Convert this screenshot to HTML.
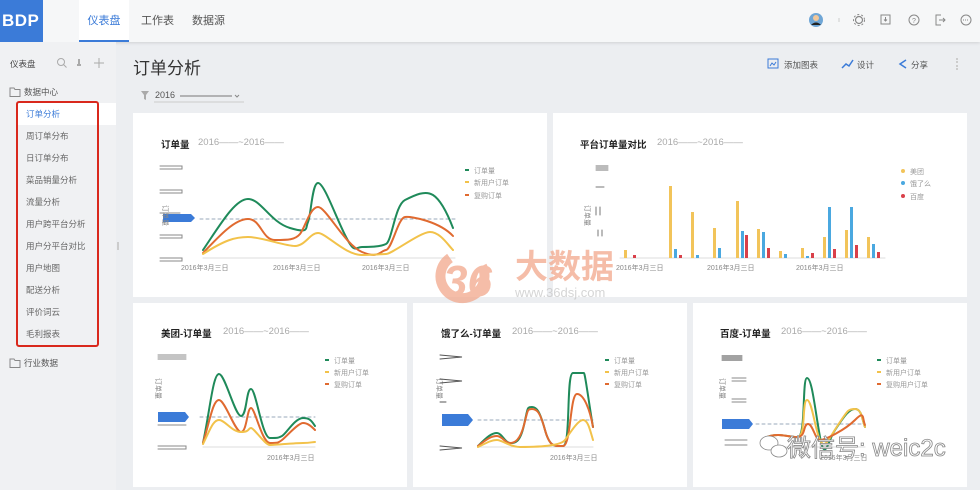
<!DOCTYPE html>
<html><head><meta charset="utf-8">
<style>
*{margin:0;padding:0;box-sizing:border-box}
body{width:980px;height:490px;overflow:hidden;background:#eceef1;font-family:"Liberation Sans","Noto Sans CJK SC",sans-serif;position:relative;color:#333}
.abs{position:absolute}
.hdr{left:0;top:0;width:980px;height:42px;background:#f6f7f8;box-shadow:0 1px 3px rgba(0,0,0,.12)}
.logo{left:0;top:0;width:43px;height:42px;background:#3b7bd8;color:#fff;font-weight:bold;font-size:17px;line-height:42px;padding-left:2px;letter-spacing:.5px}
.tab{top:0;height:42px;line-height:42px;font-size:11px;color:#555}
.side{left:0;top:42px;width:116px;height:448px;background:#f0f1f3}
.card{background:#fff;position:absolute}
.t{font-size:9.5px;font-weight:bold;color:#222;position:absolute}
.d{font-size:9.5px;color:#aaa;position:absolute}
.si{position:absolute;left:26px;font-size:8.5px;color:#666}
.lg{font-size:7px;color:#999}
</style></head><body>
<div class="abs hdr"></div>
<div class="abs logo">BDP</div>
<div class="abs tab" style="left:79px;width:50px;background:#fff;text-align:center;color:#3b7bd8;border-bottom:2px solid #3b7bd8">仪表盘</div>
<div class="abs tab" style="left:141px">工作表</div>
<div class="abs tab" style="left:192px">数据源</div>
<svg class="abs" style="left:800px;top:8px" width="180" height="26" viewBox="800 8 180 26">
<circle cx="816" cy="20" r="7" fill="#6fa6d6"/><circle cx="816" cy="18" r="3" fill="#f1c79a"/><path d="M811 25q5-5 10 0" fill="#222"/>
<line x1="839" y1="18" x2="839" y2="22" stroke="#ccc"/>
<circle cx="859" cy="20" r="3.5" fill="none" stroke="#888" stroke-width="1.2"/><circle cx="859" cy="20" r="5.5" fill="none" stroke="#888" stroke-dasharray="2 2"/>
<rect x="881" y="15" width="9" height="9" fill="none" stroke="#888"/><path d="M885.5 17v4M884 19.5l1.5 1.5 1.5-1.5" stroke="#888" fill="none"/>
<circle cx="914" cy="20" r="5" fill="none" stroke="#888"/><text x="912" y="23" font-size="7" fill="#888">?</text>
<path d="M941 15h-5v10h5M939 20h6M943 18l2 2-2 2" stroke="#888" fill="none"/>
<circle cx="966" cy="20" r="5" fill="none" stroke="#888"/><path d="M963 20h6" stroke="#888" stroke-dasharray="1 1"/>
</svg>
<div class="abs side"></div>
<div class="abs" style="left:10px;top:58px;font-size:8.5px;color:#444">仪表盘</div>
<svg class="abs" style="left:55px;top:56px" width="50" height="14"><circle cx="6" cy="6" r="3.5" fill="none" stroke="#aaa"/><path d="M8.5 8.5l3 3" stroke="#aaa"/><path d="M24 3v6M22 9h4" stroke="#aaa" stroke-width="2"/><path d="M44 2v10M39 7h10" stroke="#aaa"/></svg>
<svg class="abs" style="left:9px;top:86px" width="12" height="12"><path d="M1 2h4l1 1.5h5v7H1z" fill="none" stroke="#888"/></svg>
<div class="abs" style="left:24px;top:86px;font-size:8.5px;color:#555">数据中心</div>
<div class="abs" style="left:16px;top:103px;width:100px;height:22px;background:#fff"></div>
<div class="abs" style="left:16px;top:101px;width:83px;height:246px;border:2px solid #d9281c;border-radius:3px"></div>
<div class="si" style="top:108px;color:#3b7bd8">订单分析</div>
<div class="si" style="top:130px">周订单分布</div>
<div class="si" style="top:152px">日订单分布</div>
<div class="si" style="top:174px">菜品销量分析</div>
<div class="si" style="top:196px">流量分析</div>
<div class="si" style="top:218px">用户跨平台分析</div>
<div class="si" style="top:240px">用户分平台对比</div>
<div class="si" style="top:262px">用户地图</div>
<div class="si" style="top:284px">配送分析</div>
<div class="si" style="top:306px">评价词云</div>
<div class="si" style="top:328px">毛利报表</div>
<div class="abs" style="left:117px;top:242px;width:2px;height:8px;background:#ccc"></div>
<svg class="abs" style="left:9px;top:357px" width="12" height="12"><path d="M1 2h4l1 1.5h5v7H1z" fill="none" stroke="#888"/></svg>
<div class="abs" style="left:24px;top:357px;font-size:8.5px;color:#555">行业数据</div>

<div class="abs" style="left:133px;top:54px;font-size:17px;color:#333">订单分析</div>
<svg class="abs" style="left:140px;top:89px" width="110" height="14"><path d="M1 2h8l-3 4v5l-2-1V6z" fill="#aaa"/><line x1="14" y1="13" x2="104" y2="13" stroke="#ccc"/><line x1="40" y1="7" x2="92" y2="7" stroke="#777"/><path d="M95 6l2 2 2-2" stroke="#888" fill="none"/></svg>
<div class="abs" style="left:155px;top:90px;font-size:9px;color:#555">2016</div>
<svg class="abs" style="left:766px;top:57px" width="14" height="14"><rect x="2" y="2" width="10" height="9" fill="none" stroke="#3b7bd8"/><path d="M4 9l2-3 2 2 2-3" stroke="#3b7bd8" fill="none"/></svg>
<div class="abs" style="left:784px;top:59px;font-size:8.5px;color:#555">添加图表</div>
<svg class="abs" style="left:840px;top:57px" width="14" height="14"><path d="M2 11l4-4 3 2 4-6" stroke="#3b7bd8" fill="none" stroke-width="1.5"/></svg>
<div class="abs" style="left:857px;top:59px;font-size:8.5px;color:#555">设计</div>
<svg class="abs" style="left:897px;top:57px" width="12" height="14"><path d="M9 3L3 7l6 4" stroke="#3b7bd8" fill="none" stroke-width="1.5"/></svg>
<div class="abs" style="left:911px;top:59px;font-size:8.5px;color:#555">分享</div>
<div class="abs" style="left:956px;top:58px;width:2px;height:12px;border-left:2px dotted #ccc"></div>

<div class="card" style="left:133px;top:113px;width:414px;height:184px"></div>
<div class="card" style="left:553px;top:113px;width:414px;height:184px"></div>
<div class="card" style="left:133px;top:303px;width:274px;height:184px"></div>
<div class="card" style="left:413px;top:303px;width:274px;height:184px"></div>
<div class="card" style="left:693px;top:303px;width:274px;height:184px"></div>

<div class="t" style="left:161px;top:137px">订单量</div><div class="d" style="left:198px;top:137px">2016——~2016——</div>
<div class="t" style="left:580px;top:137px">平台订单量对比</div><div class="d" style="left:657px;top:137px">2016——~2016——</div>
<div class="t" style="left:161px;top:326px">美团-订单量</div><div class="d" style="left:223px;top:326px">2016——~2016——</div>
<div class="t" style="left:441px;top:326px">饿了么-订单量</div><div class="d" style="left:512px;top:326px">2016——~2016——</div>
<div class="t" style="left:720px;top:326px">百度-订单量</div><div class="d" style="left:781px;top:326px">2016——~2016——</div>

<svg class="abs" style="left:0;top:0" width="980" height="490" font-family="Liberation Sans, Noto Sans CJK SC, sans-serif">
<g fill="none" stroke-linecap="round">
<g stroke="#888"><path d="M160 166h22v3h-22M160 190h22v3h-22M160 213h20M160 235h22v3h-22M160 258h22v3h-22"/></g>
<path d="M163 214h28l4 4-4 4h-28z" fill="#3b7bd8" stroke="none"/>
<line x1="200" y1="219" x2="455" y2="219" stroke="#9ab" stroke-dasharray="3 3"/>
<line x1="203" y1="258" x2="455" y2="258" stroke="#ddd"/>
<path d="M203 250C220 225 235 199 248 199S270 222 290 228S305 228 308 222S312 183 318 183S335 215 345 235S355 247 362 247S380 247 386 244S395 205 405 200S425 190 433 195S448 215 453 228" stroke="#1f8a5a" stroke-width="2"/>
<path d="M203 253C220 235 235 219 248 219S262 240 275 240S295 240 300 234S310 207 318 207S345 245 362 252S380 251 386 250S398 218 405 217S440 222 453 236" stroke="#e06a30" stroke-width="2"/>
<path d="M203 254C225 240 235 237 248 237S285 246 295 246S310 233 318 233S345 255 362 255S380 254 386 254S420 232 430 232S448 245 453 250" stroke="#f2c24a" stroke-width="2"/>
<line x1="620" y1="258" x2="885" y2="258" stroke="#ddd"/>
<g stroke="#777"><path d="M596 166h12M596 168h12M596 170h12M596 187h8M596 207v8M600 207v8M598 230v6M602 230v6"/></g>
</g>
<g stroke="none">
<rect x="624" y="250" width="3" height="8" fill="#f2c45a"/><rect x="633" y="255" width="3" height="3" fill="#d9404a"/>
<rect x="669" y="186" width="3" height="72" fill="#f2c45a"/><rect x="674" y="249" width="3" height="9" fill="#4aa8e0"/><rect x="679" y="255" width="3" height="3" fill="#d9404a"/>
<rect x="691" y="212" width="3" height="46" fill="#f2c45a"/><rect x="696" y="255" width="3" height="3" fill="#4aa8e0"/>
<rect x="713" y="228" width="3" height="30" fill="#f2c45a"/><rect x="718" y="248" width="3" height="10" fill="#4aa8e0"/>
<rect x="736" y="201" width="3" height="57" fill="#f2c45a"/><rect x="741" y="231" width="3" height="27" fill="#4aa8e0"/><rect x="745" y="235" width="3" height="23" fill="#d9404a"/>
<rect x="757" y="229" width="3" height="29" fill="#f2c45a"/><rect x="762" y="232" width="3" height="26" fill="#4aa8e0"/><rect x="767" y="248" width="3" height="10" fill="#d9404a"/>
<rect x="779" y="251" width="3" height="7" fill="#f2c45a"/><rect x="784" y="254" width="3" height="4" fill="#4aa8e0"/>
<rect x="801" y="248" width="3" height="10" fill="#f2c45a"/><rect x="806" y="256" width="3" height="2" fill="#4aa8e0"/><rect x="811" y="253" width="3" height="5" fill="#d9404a"/>
<rect x="823" y="237" width="3" height="21" fill="#f2c45a"/><rect x="828" y="207" width="3" height="51" fill="#4aa8e0"/><rect x="833" y="249" width="3" height="9" fill="#d9404a"/>
<rect x="845" y="230" width="3" height="28" fill="#f2c45a"/><rect x="850" y="207" width="3" height="51" fill="#4aa8e0"/><rect x="855" y="245" width="3" height="13" fill="#d9404a"/>
<rect x="867" y="237" width="3" height="21" fill="#f2c45a"/><rect x="872" y="244" width="3" height="14" fill="#4aa8e0"/><rect x="877" y="252" width="3" height="6" fill="#d9404a"/>
</g>
<g font-size="7" fill="#888">
<text x="181" y="270">2016年3月三日</text><text x="273" y="270">2016年3月三日</text><text x="362" y="270">2016年3月三日</text>
<text x="616" y="270">2016年3月三日</text><text x="707" y="270">2016年3月三日</text><text x="796" y="270">2016年3月三日</text>
<text x="267" y="460">2016年3月三日</text><text x="550" y="460">2016年3月三日</text><text x="820" y="460">2016年3月三日</text>
<text x="163" y="205" transform="rotate(90 163 205)">订单量</text>
<text x="585" y="205" transform="rotate(90 585 205)">订单量</text>
<text x="156" y="378" transform="rotate(90 156 378)">订单量</text>
<text x="437" y="378" transform="rotate(90 437 378)">订单量</text>
<text x="720" y="378" transform="rotate(90 720 378)">订单量</text>
</g>
<g font-size="7" fill="#999">
<rect x="465" y="169" width="4" height="2" fill="#1f8a5a"/><text x="474" y="173">订单量</text>
<rect x="465" y="181" width="4" height="2" fill="#f2c24a"/><text x="474" y="185">新用户订单</text>
<rect x="465" y="194" width="4" height="2" fill="#e06a30"/><text x="474" y="198">复购订单</text>
<circle cx="903" cy="171" r="2" fill="#f2c45a"/><text x="910" y="174">美团</text>
<circle cx="903" cy="183" r="2" fill="#4aa8e0"/><text x="910" y="186">饿了么</text>
<circle cx="903" cy="196" r="2" fill="#d9404a"/><text x="910" y="199">百度</text>
<rect x="325" y="359" width="4" height="2" fill="#1f8a5a"/><text x="334" y="363">订单量</text>
<rect x="325" y="371" width="4" height="2" fill="#f2c24a"/><text x="334" y="375">新用户订单</text>
<rect x="325" y="383" width="4" height="2" fill="#e06a30"/><text x="334" y="387">复购订单</text>
<rect x="605" y="359" width="4" height="2" fill="#1f8a5a"/><text x="614" y="363">订单量</text>
<rect x="605" y="371" width="4" height="2" fill="#f2c24a"/><text x="614" y="375">新用户订单</text>
<rect x="605" y="383" width="4" height="2" fill="#e06a30"/><text x="614" y="387">复购订单</text>
<rect x="877" y="359" width="4" height="2" fill="#1f8a5a"/><text x="886" y="363">订单量</text>
<rect x="877" y="371" width="4" height="2" fill="#f2c24a"/><text x="886" y="375">新用户订单</text>
<rect x="877" y="383" width="4" height="2" fill="#e06a30"/><text x="886" y="387">复购用户订单</text>
</g>
<g fill="none" stroke-linecap="round">
<g stroke="#888"><path d="M158 355h28M158 357h28M158 359h28M158 446h28v3h-28M158 425h28"/></g>
<path d="M158 412h27l4 5-4 5h-27z" fill="#3b7bd8" stroke="none"/>
<line x1="200" y1="417" x2="315" y2="417" stroke="#9ab" stroke-dasharray="3 3"/>
<line x1="203" y1="447" x2="315" y2="447" stroke="#ddd"/>
<path d="M203 443C210 410 213 374 219 374S235 416 241 416S246 389 251 389S262 438 270 438S278 438 282 436S295 418 303 418S312 422 315 426" stroke="#1f8a5a" stroke-width="2"/>
<path d="M203 443C210 420 213 400 219 400S235 432 241 432S247 408 251 408S262 443 270 443S278 443 282 440S298 423 303 423S312 427 315 430" stroke="#e06a30" stroke-width="2"/>
<path d="M203 444C210 430 213 420 219 420S232 432 241 432S248 428 251 428S265 445 270 445S295 443 303 443S312 442 315 442" stroke="#f2c24a" stroke-width="2"/>
<g stroke="#555"><path d="M440 355l22 2-22 2M440 379l22 2-22 2M440 446l22 2-22 2M440 402h6"/></g>
<path d="M442 414h26l5 6-5 6h-26z" fill="#3b7bd8" stroke="none"/>
<line x1="478" y1="420" x2="593" y2="420" stroke="#9ab" stroke-dasharray="3 3"/>
<line x1="478" y1="447" x2="593" y2="447" stroke="#ddd"/>
<path d="M478 446C488 436 492 433 497 433S505 443 510 443S520 443 524 425S527 407 532 407S540 412 545 430S555 446 563 446S566 373 573 373S583 373 584 373S590 410 593 427" stroke="#1f8a5a" stroke-width="2"/>
<path d="M478 446C488 438 492 436 497 436S505 443 510 443S520 440 524 425S527 409 532 409S540 412 545 430S555 446 563 446S570 394 577 394S590 410 593 427" stroke="#e06a30" stroke-width="2"/>
<path d="M478 447C488 442 492 440 497 440S510 447 520 447S560 447 565 440S578 420 583 420S590 430 593 440" stroke="#f2c24a" stroke-width="2"/>
<path d="M722 356h20M722 358h20M722 360h20" stroke="#444" stroke-width="1"/>
<g stroke="#888"><path d="M732 378h14M732 381h14M732 399h14M732 402h14M725 440h22M725 445h22"/></g>
<path d="M722 419h27l4 5-4 5h-27z" fill="#3b7bd8" stroke="none"/>
<line x1="756" y1="424" x2="865" y2="424" stroke="#9ab" stroke-dasharray="3 3"/>
<line x1="767" y1="447" x2="865" y2="447" stroke="#ddd"/>
<path d="M767 437C780 432 790 438 798 437S802 378 807 378S815 410 820 437S828 440 835 430S848 409 855 409S862 420 865 427" stroke="#1f8a5a" stroke-width="2"/>
<path d="M767 437C780 432 790 438 798 437S802 400 807 400S815 430 820 440S828 440 838 425S848 409 855 409S862 420 865 427" stroke="#f2c24a" stroke-width="2"/>
<path d="M767 437C780 432 790 438 798 437S803 424 808 424S815 440 820 440S845 430 855 420S862 418 865 425" stroke="#e06a30" stroke-width="2"/>
</g>
<g opacity="0.75">
<path d="M450 258a22 22 0 1 0 32 8" fill="none" stroke="#f2a88c" stroke-width="10"/>
<text x="443" y="296" font-size="44" font-weight="bold" font-style="italic" fill="#f2a88c">36</text>
<text x="515" y="278" font-size="33" font-weight="bold" fill="#f2a88c" font-family="Noto Sans CJK SC, sans-serif">大数据</text>
<text x="515" y="297" font-size="13" fill="#c8c8c8">www.36dsj.com</text>
</g>
<g>
<ellipse cx="769" cy="443" rx="9" ry="7" fill="#fff" stroke="#888" stroke-width="0.8"/>
<ellipse cx="779" cy="451" rx="8" ry="6" fill="#fff" stroke="#888" stroke-width="0.8"/>
<text x="787" y="456" font-size="24" fill="#fff" stroke="#888" stroke-width="0.8" font-family="Liberation Sans, Noto Sans CJK SC, sans-serif">微信号: weic2c</text>
</g>
</svg>
</body></html>
